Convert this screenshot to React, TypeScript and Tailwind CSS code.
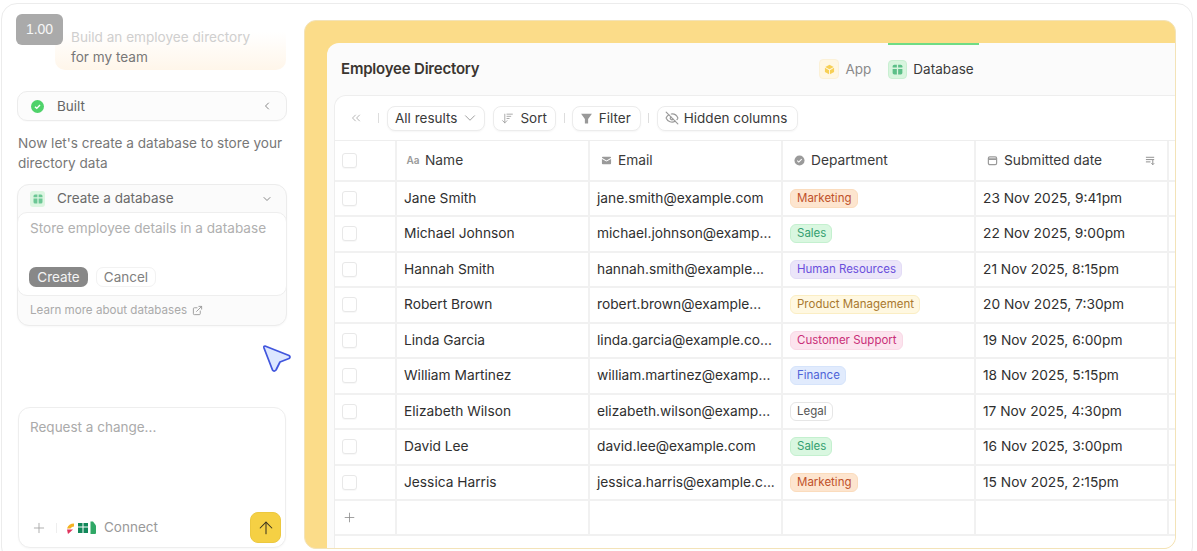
import React from 'react';
import { ChevronDown, ChevronLeft, ChevronsLeft, ExternalLink, Plus, ArrowUp, EyeOff, ArrowDownWideNarrow } from 'lucide-react';

const employees = [
  { name: 'Jane Smith', email: 'jane.smith@example.com', dept: 'Marketing', date: '23 Nov 2025, 9:41pm' },
  { name: 'Michael Johnson', email: 'michael.johnson@examp...', dept: 'Sales', date: '22 Nov 2025, 9:00pm' },
  { name: 'Hannah Smith', email: 'hannah.smith@example...', dept: 'Human Resources', date: '21 Nov 2025, 8:15pm' },
  { name: 'Robert Brown', email: 'robert.brown@example...', dept: 'Product Management', date: '20 Nov 2025, 7:30pm' },
  { name: 'Linda Garcia', email: 'linda.garcia@example.co...', dept: 'Customer Support', date: '19 Nov 2025, 6:00pm' },
  { name: 'William Martinez', email: 'william.martinez@examp...', dept: 'Finance', date: '18 Nov 2025, 5:15pm' },
  { name: 'Elizabeth Wilson', email: 'elizabeth.wilson@examp...', dept: 'Legal', date: '17 Nov 2025, 4:30pm' },
  { name: 'David Lee', email: 'david.lee@example.com', dept: 'Sales', date: '16 Nov 2025, 3:00pm' },
  { name: 'Jessica Harris', email: 'jessica.harris@example.c...', dept: 'Marketing', date: '15 Nov 2025, 2:15pm' },
];

const deptStyles: Record<string, string> = {
  Marketing: 'bg-[#fde5cf] border-[#fbdcbd] text-[#c0512a]',
  Sales: 'bg-[#d9f7e0] border-[#c4f0cf] text-[#35a070]',
  'Human Resources': 'bg-[#ebe5f9] border-[#e3dcf6] text-[#6a4fdc]',
  'Product Management': 'bg-[#fff8e1] border-[#fbeec4] text-[#a9782f]',
  'Customer Support': 'bg-[#fce4ee] border-[#f9d9e6] text-[#c92f78]',
  Finance: 'bg-[#e1ebfd] border-[#d6e4fb] text-[#4f63d8]',
  Legal: 'bg-white border-[#e6e6e6] text-[#555555]',
};

const TableIcon = ({ className }: { className: string }) => (
  <svg viewBox="0 0 12 12" className={className} fill="currentColor">
    <path d="M1.500 3A1.500 1.500 0 0 1 3 1.500h2.400v2.700H1.500z" />
    <path d="M6.600 1.500H9A1.500 1.500 0 0 1 10.500 3v1.200H6.600z" />
    <path d="M1.500 5.600h3.900v4.900H3A1.500 1.500 0 0 1 1.500 9z" />
    <path d="M6.600 5.600h3.900V9A1.500 1.500 0 0 1 9 10.500H6.600z" />
  </svg>
);

const Checkbox = () => (
  <div className="w-[15px] h-[15px] rounded-[3px] border border-[#e8e8e8] bg-white shadow-[0_1px_1px_rgba(0,0,0,0.03)]" />
);

const ToolButton = ({ children }: { children: React.ReactNode }) => (
  <div className="h-[25px] px-[7px] flex items-center gap-[6px] rounded-[8px] border border-[#ececec] bg-white shadow-[0_1px_2px_rgba(0,0,0,0.04)] text-[13.5px] text-[#3a3a3a]">
    {children}
  </div>
);

const Sep = () => <div className="w-px h-[10px] bg-[#dddddd]" />;

const HeadCell = ({ icon, label, extra }: { icon: React.ReactNode; label: string; extra?: React.ReactNode }) => (
  <div className="flex items-center pl-[10px] pr-[11px] border-r-2 border-[#f1f1f1] text-[13.75px] text-[#3a3a3a] gap-[6px]">
    <span className="w-[12px] flex justify-center text-[#9a9a9a]">{icon}</span>
    <span className="flex-1">{label}</span>
    {extra}
  </div>
);

const Cell = ({ children }: { children?: React.ReactNode }) => (
  <div className="flex items-center pl-[7px] border-r-2 border-[#f1f1f1] text-[13.75px] text-[#2f2f2f] whitespace-nowrap overflow-hidden">
    {children}
  </div>
);

function LeftPanel() {
  return (
    <div className="w-[302px] shrink-0 flex flex-col pl-[14px] pr-[15px] relative">
      <div className="ml-[39px] mt-[28px] w-[231px] h-[38px] rounded-b-[10px] bg-gradient-to-b from-white to-[#fff6ea] pl-[16px] text-[13.6px] leading-[20px] text-[#777777]">
        <div className="text-[#cfcfcf] -mt-[5px]">Build an employee directory</div>
        <div>for my team</div>
      </div>

      <div className="mt-[21px] h-[30px] ml-px w-[270px] flex items-center pl-[13px] pr-[13px] rounded-[10px] border border-[#ececec] bg-[#fcfcfc] shadow-[0_1px_1px_rgba(0,0,0,0.02)]">
        <svg viewBox="0 0 14 14" className="w-[13px] h-[13px]">
          <circle cx="7" cy="7" r="7" fill="#4fd26a" />
          <path d="M4.300 7.200l1.900 1.800 3.500-3.700" fill="none" stroke="#fff" strokeWidth="1.500" />
        </svg>
        <span className="ml-[13px] flex-1 text-[13.500px] text-[#666666]">Built</span>
        <ChevronLeft className="w-[12px] h-[12px] text-[#888888]" strokeWidth={2} />
      </div>

      <p className="mt-[12px] ml-[2px] text-[13.6px] leading-[20px] text-[#777777]">
        Now let's create a database to store your directory data
      </p>

      <div className="mt-[11px] ml-px w-[270px] h-[142px] rounded-[12px] border border-[#ececec] bg-[#fbfbfb] flex flex-col shadow-[0_1px_2px_rgba(0,0,0,0.03)]">
        <div className="h-[27px] flex items-center pl-[12px] pr-[13px] shrink-0">
          <div className="w-[15px] h-[16px] rounded-[3px] bg-[#dcf6e1] flex items-center justify-center text-[#6cc795]">
            <TableIcon className="w-[12px] h-[12px]" />
          </div>
          <span className="ml-[12px] flex-1 text-[13.500px] text-[#6a6a6a]">Create a database</span>
          <ChevronDown className="w-[12px] h-[12px] text-[#888888]" />
        </div>
        <div className="h-[84px] shrink-0 bg-white rounded-[10px] border border-[#eeeeee] -mx-px pl-[11px] flex flex-col">
          <div className="mt-[5px] ml-px text-[13.6px] leading-[20px] text-[#b0b0b0]">Store employee details in a database</div>
          <div className="mt-[29px] flex gap-[8px] text-[13.500px]">
            <div className="h-[20px] w-[59px] rounded-[7px] bg-[#888888] text-[#f4f4f4] flex items-center justify-center">Create</div>
            <div className="h-[20px] w-[60px] rounded-[7px] border border-[#f2f2f2] text-[#808080] flex items-center justify-center">Cancel</div>
          </div>
        </div>
        <div className="flex-1 flex items-center pl-[12px] gap-[5px] text-[11.6px] text-[#aaaaaa]">
          <span>Learn more about databases</span>
          <ExternalLink className="w-[11px] h-[11px] text-[#999999]" />
        </div>
      </div>

      <div className="mt-[81px] ml-[2px] w-[268px] h-[141px] rounded-[12px] border border-[#eeeeee] bg-white shadow-[0_1px_2px_rgba(0,0,0,0.03)] flex flex-col">
        <div className="pl-[11px] pt-[9px] text-[13.500px] leading-[20px] text-[#aaaaaa]">Request a change...</div>
        <div className="mt-auto flex items-center pb-[4px] pl-[12px] pr-[4px]">
          <Plus className="w-[16px] h-[16px] text-[#a0a0a0]" strokeWidth={1.250} />
          <div className="ml-[9px] w-px h-[10px] bg-[#eeeeee]" />
          <svg viewBox="0 0 30 16" className="ml-[10px] w-[30px] h-[16px]">
            <path d="M0 8.500a7.500 7.500 0 0 1 7-5v3a4.500 4.500 0 0 0-3.500 2z" fill="#f4b322" />
            <path d="M0 9.500h6l-5 4.500z" fill="#e0345d" />
            <rect x="8" y="0" width="16" height="16" rx="6" fill="#ffffff" />
            <path d="M11 3h4.500v3.500H11zM16.500 3H21v3.500h-4.500z" fill="#12885a" />
            <path d="M11 7.500h4.500V13H11zM16.500 7.500H21V13h-4.500z" fill="#12885a" />
            <path d="M23.500 1.500h2.500l3 4v7.500a1 1 0 0 1-1 1h-4.500z" fill="#2fa866" />
          </svg>
          <span className="ml-[7px] flex-1 text-[13.500px] text-[#999999]">Connect</span>
          <div className="w-[31px] h-[31px] rounded-[8px] bg-[#f5d044] border border-[#ecc83f] flex items-center justify-center">
            <ArrowUp className="w-[20px] h-[20px] text-[#3a3320]" strokeWidth={1.250} />
          </div>
        </div>
      </div>

      {/* zoom badge sits on top of the faded chat */}
      <div className="absolute left-[14px] top-[10px] w-[47px] h-[31px] rounded-[6px] bg-[#aaaaaa] text-white/90 text-[14px] flex items-center justify-center font-['Liberation_Sans',sans-serif]">
        1.00
      </div>

      <svg viewBox="0 0 30 30" className="absolute left-[260px] top-[339px] w-[30px] h-[30px]">
        <path d="M3 3 L27 12.500 Q29 14 27 15.500 L18 19 L14 27 Q12 29 10.500 27 L2 5 Q1.500 3 3 3Z" fill="#dde7ff" stroke="#4156dd" strokeWidth="1.750" strokeLinejoin="round" />
      </svg>
    </div>
  );
}

function DataTable() {
  const cols = 'grid grid-cols-[62px_193px_193px_193px_193px_1fr]';
  return (
    <div className="flex-1 ml-[7px] rounded-tl-[12px] border-l border-t border-[#eeeeee] bg-white flex flex-col min-h-0">
      <div className="h-[45px] shrink-0 flex items-center border-b border-[#eeeeee] pl-[14px]">
        <ChevronsLeft className="w-[14px] h-[14px] text-[#aaaaaa]" strokeWidth={1.500} />
        <div className="ml-[15px]"><Sep /></div>
        <div className="ml-[8px]">
          <ToolButton>
            <span>All results</span>
            <ChevronDown className="w-[18px] h-[18px] -mx-[2px] text-[#999999]" strokeWidth={1.250} />
          </ToolButton>
        </div>
        <div className="ml-[8px]">
          <ToolButton>
            <ArrowDownWideNarrow className="w-[13px] h-[13px] text-[#999999]" strokeWidth={1.500} />
            <span className="mr-[1px]">Sort</span>
          </ToolButton>
        </div>
        <div className="ml-[8px]"><Sep /></div>
        <div className="ml-[7px]">
          <ToolButton>
            <svg viewBox="0 0 12 12" className="w-[13px] h-[13px] text-[#999999]" fill="currentColor">
              <path d="M1 1.500h10L7.500 6.500V10.500h-3V6.500z" strokeLinejoin="round" />
            </svg>
            <span className="mr-[2px]">Filter</span>
          </ToolButton>
        </div>
        <div className="ml-[7px]"><Sep /></div>
        <div className="ml-[8px]">
          <ToolButton>
            <EyeOff className="w-[14px] h-[14px] text-[#999999]" strokeWidth={2} />
            <span className="-ml-px mr-[3px]">Hidden columns</span>
          </ToolButton>
        </div>
      </div>

      <div className={`${cols} h-[40.500px] shrink-0 border-b-2 border-[#f1f1f1]`}>
        <div className="flex items-center pl-[7px] border-r-2 border-[#f1f1f1]"><Checkbox /></div>
        <HeadCell label="Name" icon={<span className="text-[10px] font-semibold">Aa</span>} />
        <HeadCell
          label="Email"
          icon={
            <svg viewBox="0 0 12 12" className="w-[11px] h-[11px]" fill="currentColor">
              <path d="M1 3a1 1 0 0 1 1-1h8a1 1 0 0 1 1 1L6 6z" />
              <path d="M1 4.300V9a1 1 0 0 0 1 1h8a1 1 0 0 0 1-1V4.300L6 7.200z" />
            </svg>
          }
        />
        <HeadCell
          label="Department"
          icon={
            <svg viewBox="0 0 12 12" className="w-[11px] h-[11px]">
              <circle cx="6" cy="6" r="5.500" fill="currentColor" />
              <path d="M3.500 6.200l1.700 1.500 3.200-3.200" fill="none" stroke="#fff" strokeWidth="1.200" />
            </svg>
          }
        />
        <HeadCell
          label="Submitted date"
          icon={
            <svg viewBox="0 0 12 12" className="w-[11px] h-[11px]" fill="none" stroke="currentColor" strokeWidth="1.300">
              <rect x="1.500" y="2" width="9" height="8.500" rx="1.500" />
              <path d="M1.500 4.500h9" strokeWidth="2" />
            </svg>
          }
          extra={
            <svg viewBox="0 0 12 12" className="w-[11px] h-[11px] text-[#888888]" fill="none" stroke="currentColor" strokeWidth="1">
              <path d="M1 2.500h9M1 5h9M1 7.500h5M8.500 5.500v5M7 9l1.500 1.500L10 9" />
            </svg>
          }
        />
        <div />
      </div>

      {employees.map((e) => (
        <div key={e.name} className={`${cols} h-[35.500px] shrink-0 border-b-2 border-[#f1f1f1]`}>
          <div className="flex items-center pl-[7px] border-r-2 border-[#f1f1f1]"><Checkbox /></div>
          <Cell>{e.name}</Cell>
          <Cell>{e.email}</Cell>
          <Cell>
            <span className={`h-[19px] flex items-center pl-[6px] pr-[5px] rounded-[6px] border text-[11.500px] ${deptStyles[e.dept]}`}>{e.dept}</span>
          </Cell>
          <Cell>{e.date}</Cell>
          <div />
        </div>
      ))}

      <div className={`${cols} h-[34.500px] shrink-0 border-b-2 border-[#f1f1f1]`}>
        <div className="flex items-center pl-[7px] border-r-2 border-[#f1f1f1]">
          <Plus className="w-[15px] h-[15px] text-[#888888]" strokeWidth={1.250} />
        </div>
        <Cell />
        <Cell />
        <Cell />
        <Cell />
        <div />
      </div>
    </div>
  );
}

function Preview() {
  return (
    <div className="w-[872px] mt-[16px] h-[529px] rounded-[12px] bg-[#fbdc89] border border-[#f3e3b8] flex flex-col pl-[22px] pt-[22px] overflow-hidden">
      <div className="flex-1 min-h-0 rounded-tl-[12px] rounded-br-[12px] bg-[#fbfbfb] flex flex-col">
        <div className="h-[52px] shrink-0 flex items-center pl-[14px]">
          <span className="text-[15px] font-semibold text-[#3a3530] tracking-[-0.2px]">Employee Directory</span>
          <div className="ml-[340px] flex items-center gap-[6px]">
            <div className="w-[20px] h-[20px] rounded-[4px] bg-[#fff7e3] border border-[#fbf1d8] flex items-center justify-center">
              <svg viewBox="0 0 12 12" className="w-[11px] h-[11px]">
                <path d="M6 .800l4.600 2.500L6 5.800 1.400 3.300z" fill="#f7d056" />
                <path d="M1 4.200l4.500 2.500v4.600L1 8.800zM11 4.200L6.500 6.700v4.600L11 8.800z" fill="#f7d056" />
              </svg>
            </div>
            <span className="text-[13.500px] text-[#8a8a8a]">App</span>
          </div>
          <div className="ml-[17px] relative flex items-center gap-[6px] h-full pr-[5px]">
            <div className="absolute left-0 right-0 top-0 h-[2px] bg-[#6fdc85]" />
            <div className="w-[19px] h-[19px] rounded-[4px] bg-[#d8f5de] border border-[#c9efd2] flex items-center justify-center text-[#5cbf88]">
              <TableIcon className="w-[13px] h-[13px]" />
            </div>
            <span className="text-[13.500px] text-[#3a3a3a]">Database</span>
          </div>
        </div>
        <DataTable />
      </div>
    </div>
  );
}

export default function App() {
  return (
    <div className="w-[1197px] h-[551px] bg-white overflow-hidden font-['Inter',sans-serif] pt-[3px] pl-px">
      <div className="w-[1192px] h-[560px] rounded-[16px] border border-[#ececec] flex relative">
        <LeftPanel />
        <Preview />
      </div>
    </div>
  );
}
